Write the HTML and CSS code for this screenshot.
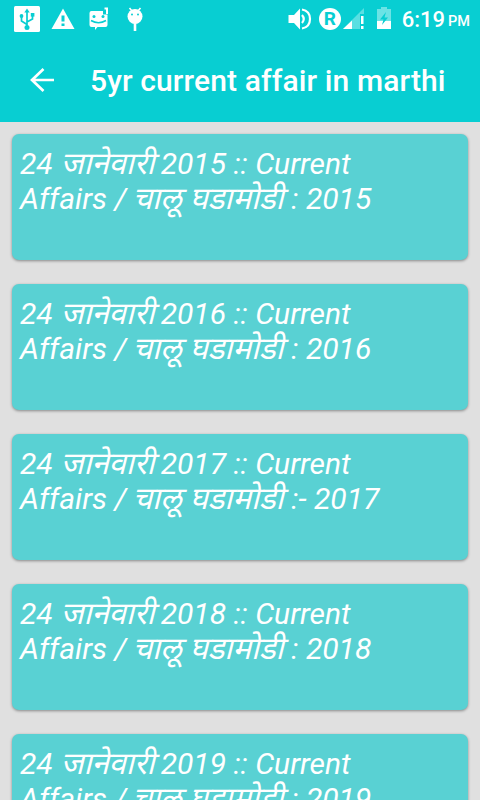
FILE: index.html
```
<!DOCTYPE html>
<html lang="mr">
<head>
    <meta charset="UTF-8">
    <meta name="viewport" content="width=device-width, initial-scale=1.0">
    <title>5yr current affair in marthi</title>
    <link rel="stylesheet" href="styles.css">
</head>
<body>
    <header>
        <div class="status-bar">
            <div class="status-left">
                <!-- usb -->
                <svg width="26" height="26" viewBox="0 0 26 26">
                    <rect width="26" height="26" rx="1.5" fill="#fff"/>
                    <path d="M13 21V6M13 18.500L7.500 15V10M13 16l5.500-3V9" fill="none" stroke="#08ced2" stroke-width="1.700"/>
                    <path d="M10.300 6.500L13 2.500l2.700 4z" fill="#08ced2"/>
                    <circle cx="13" cy="21.500" r="2.500" fill="#08ced2"/>
                    <circle cx="7.500" cy="10" r="1.900" fill="#08ced2"/>
                    <path d="M16.800 7h3.600v3.600h-3.600z" fill="#08ced2"/>
                </svg>
                <!-- warning -->
                <svg class="warning" width="24" height="26" viewBox="0 0 24 26">
                    <path d="M12 2.500L23.500 23H.5z" fill="#fff"/>
                    <path d="M10.500 9.500h3v6h-3zM10.500 17.500h3v2.500h-3z" fill="#08ced2"/>
                </svg>
                <!-- message -->
                <svg class="message" width="20" height="26" viewBox="0 0 20 26">
                    <path d="M2.500 5H14v3.500h4.500V19q0 2-2 2H8.500L6 24v-3H2.500q-2 0-2-2V7q0-2 2-2z" fill="#fff"/>
                    <path d="M15.500 1.500h3.500V8h-2V3.500h-1.500z" fill="#fff"/>
                    <circle cx="5" cy="10.500" r="1.500" fill="#08ced2"/>
                    <circle cx="14" cy="10.500" r="1.500" fill="#08ced2"/>
                    <path d="M2 14.500q7.500 4.500 15 0" fill="none" stroke="#08ced2" stroke-width="1.600"/>
                </svg>
                <!-- android -->
                <svg class="android" width="16" height="26" viewBox="0 0 16 26">
                    <circle cx="8" cy="10.500" r="7.500" fill="#fff"/>
                    <path d="M5 5L2.500 2M11 5l2.500-3" stroke="#fff" stroke-width="1.600"/>
                    <path d="M8 17v8" stroke="#fff" stroke-width="2.600"/>
                    <circle cx="5" cy="8.500" r="1" fill="#08ced2"/>
                    <circle cx="11" cy="8.500" r="1" fill="#08ced2"/>
                </svg>
            </div>
            <div class="status-right">
                <!-- volume -->
                <svg class="volume" width="24" height="24" viewBox="0 0 24 24">
                    <path d="M.5 8H6l6-6.500v21L6 16H.5z" fill="#fff"/>
                    <path d="M14 8q3.500 4 0 8M14 2.500q8 1.500 8 9.500t-8 9.500" fill="none" stroke="#fff" stroke-width="2.200"/>
                </svg>
                <span class="roaming">R</span>
                <!-- signal -->
                <svg class="signal" width="21" height="21" viewBox="0 0 21 21">
                    <path d="M0 21L21 0v6h-4v15z" fill="#59dfe2"/>
                    <path d="M0 21l9-8.500V21z" fill="#fff"/>
                    <path d="M18 8h2.500v8H18zM18 18h2.500v3H18z" fill="#fff"/>
                </svg>
                <!-- battery -->
                <svg class="battery" width="14" height="22" viewBox="0 0 14 22">
                    <path d="M0 2h4V0h6v2h4v20H0z" fill="#6be3e5"/>
                    <path d="M0 14h14v8H0z" fill="#fff"/>
                    <path d="M9 5l-6 7.500h3.500L5 18l6-7.500H7.500z" fill="#08ced2"/>
                </svg>
                <span class="time">6:19</span>
                <span class="period">PM</span>
            </div>
        </div>
        <div class="toolbar">
            <svg width="24" height="24" viewBox="0 0 24 24">
                <path d="M24 12H2M13.500 1L2 12l11.500 11" fill="none" stroke="#fff" stroke-width="2.700"/>
            </svg>
            <h1>5yr current affair in marthi</h1>
        </div>
    </header>

    <main>
        <div class="card">24 <span class="deva date">जानेवारी</span> 2015 :: Current<br>Affairs / <span class="deva topic">चालू घडामोडी</span> : 2015</div>
        <div class="card">24 <span class="deva date">जानेवारी</span> 2016 :: Current<br>Affairs / <span class="deva topic">चालू घडामोडी</span> : 2016</div>
        <div class="card">24 <span class="deva date">जानेवारी</span> 2017 :: Current<br>Affairs / <span class="deva topic">चालू घडामोडी</span> :- 2017</div>
        <div class="card">24 <span class="deva date">जानेवारी</span> 2018 :: Current<br>Affairs / <span class="deva topic">चालू घडामोडी</span> : 2018</div>
        <div class="card">24 <span class="deva date">जानेवारी</span> 2019 :: Current<br>Affairs / <span class="deva topic">चालू घडामोडी</span> : 2019</div>
    </main>
</body>
</html>
```

FILE: styles.css
```
* {
    box-sizing: border-box;
}

body {
    margin: 0;
    height: 800px;
    overflow: hidden;
    background-color: #e0e0e0;
    color: #fff;
    font-family: Roboto, "Noto Sans", sans-serif;
}

header {
    height: 122px;
    background-color: #08ced2;
}

svg {
    display: block;
    flex-shrink: 0;
}

.status-bar {
    display: flex;
    justify-content: space-between;
    height: 38px;
    padding: 6px 10px 0 14px;
}

.status-left {
    display: flex;
}

.warning {
    margin-left: 11px;
}

.message {
    margin-left: 14px;
}

.android {
    margin-left: 18px;
}

.status-right {
    display: flex;
    align-items: flex-start;
}

.volume {
    margin-top: 1px;
}

.roaming {
    width: 22px;
    height: 22px;
    margin: 2px 2px 0 7px;
    border-radius: 50%;
    background-color: #fff;
    color: #08ced2;
    font-size: 19px;
    font-weight: 700;
    line-height: 22px;
    text-align: center;
}

.signal {
    margin: 2px 13px 0 0;
}

.battery {
    margin: 1px 11px 0 0;
}

.time {
    font-size: 22px;
    font-weight: 500;
    line-height: 28px;
}

.period {
    margin-left: 3px;
    font-size: 14.500px;
    font-weight: 500;
    line-height: 32px;
}

.toolbar {
    display: flex;
    align-items: center;
    gap: 36px;
    height: 84px;
    padding-left: 30px;
}

h1 {
    margin: 2px 0 0;
    font-size: 30px;
    font-weight: 500;
    letter-spacing: 0.12px;
    line-height: 36px;
    white-space: nowrap;
}

main {
    display: flex;
    flex-direction: column;
    gap: 24px;
    padding: 12px;
}

.card {
    flex-shrink: 0;
    height: 126px;
    padding: 12px 8px;
    border-radius: 7px;
    background-color: #59d1d3;
    box-shadow: 0 1px 3px rgba(0,0,0,0.4);
    font-size: 30px;
    font-style: italic;
    line-height: 35px;
    white-space: nowrap;
}

/* Devanagari has no italic face, so it is slanted here */
.deva {
    display: inline-block;
    height: 35px;
    font-size: 31px;
    font-style: normal;
    transform: skewX(-14deg);
}

.date {
    margin: 0 -4px 0 3px;
}

.topic {
    margin: 0 -2px 0 1px;
}
```
